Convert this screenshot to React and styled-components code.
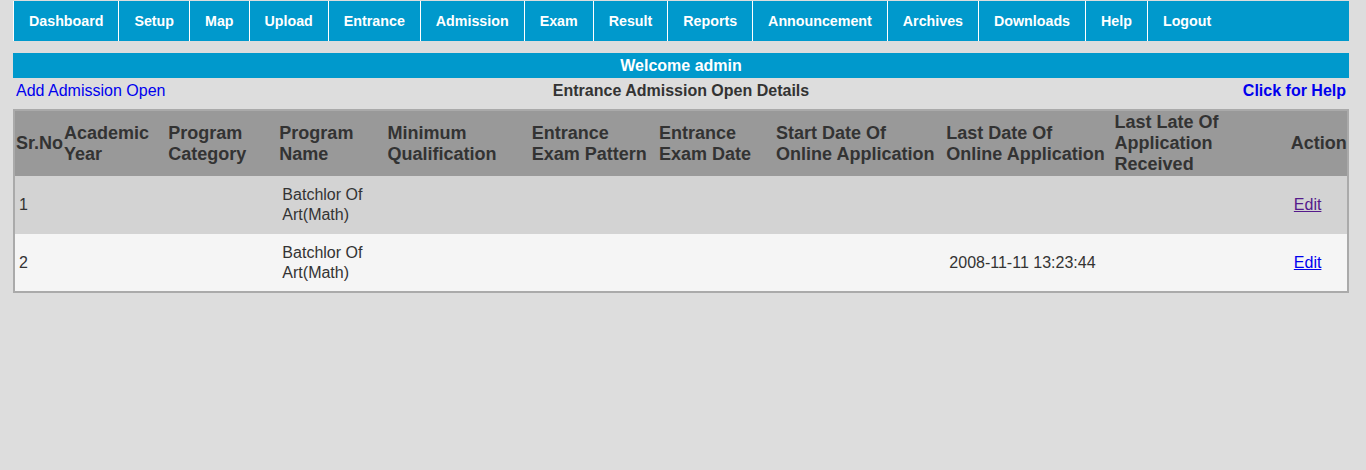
import React from "react"
import styled, { createGlobalStyle } from "styled-components"

const GlobalStyle = createGlobalStyle`
  html, body {
    margin: 0;
    padding: 0;
    background: #dddddd;
    font-family: "Liberation Sans", Arial, sans-serif;
  }
`

const Page = styled.div`
  width: 1336px;
  margin-left: 13px;
  padding-top: 1px;
`

const NavBar = styled.ul`
  display: flex;
  height: 40px;
  margin: 0;
  padding: 0;
  list-style: none;
  background: #0099cc;
`

const NavItem = styled.li`
  display: flex;
  align-items: center;
  padding: 0 15px;
  border-left: 1px solid #ffffff;
  color: #ffffff;
  font-size: 14.25px;
  font-weight: bold;
  white-space: nowrap;
`

const WelcomeBar = styled.div`
  margin-top: 12px;
  height: 25px;
  line-height: 25px;
  background: #0099cc;
  color: #ffffff;
  font-size: 16px;
  font-weight: bold;
  text-align: center;
`

const TitleRow = styled.div`
  display: grid;
  grid-template-columns: 1fr auto 1fr;
  align-items: start;
  box-sizing: border-box;
  height: 31px;
  padding: 3px 3px 0;
  line-height: 20px;
`

const LinkText = styled.a`
  color: #0000ee;
  font-size: 16px;
  font-weight: ${p => (p.$bold ? "bold" : "normal")};
  text-decoration: none;
  justify-self: ${p => (p.$right ? "end" : "start")};
  cursor: pointer;
`

const Title = styled.div`
  color: #333333;
  font-size: 16px;
  font-weight: bold;
`

const Table = styled.table`
  width: 1336px;
  table-layout: fixed;
  border-collapse: collapse;
  border: 2px solid #aaaaaa;
`

const HeadCell = styled.th`
  padding: 1px;
  background: #999999;
  color: #333333;
  font-size: 18px;
  font-weight: bold;
  line-height: 21px;
  text-align: left;
  vertical-align: middle;
`

const Row = styled.tr`
  height: 58px;
  background: ${p => (p.$alt ? "#f5f5f5" : "#d3d3d3")};
`

const Cell = styled.td`
  padding: 0 4px;
  color: #333333;
  font-size: 16px;
  line-height: 20px;
  vertical-align: middle;
`

const EditLink = styled.a`
  color: ${p => (p.$visited ? "#551a8b" : "#0000ee")};
  text-decoration: underline;
  cursor: pointer;
`

const menu = [
  "Dashboard", "Setup", "Map", "Upload", "Entrance", "Admission", "Exam",
  "Result", "Reports", "Announcement", "Archives", "Downloads", "Help", "Logout",
]

const columns = [
  { label: "Sr.No", width: 49 },
  { label: "Academic Year", width: 104 },
  { label: "Program Category", width: 111 },
  { label: "Program Name", width: 108 },
  { label: "Minimum Qualification", width: 144 },
  { label: "Entrance Exam Pattern", width: 127 },
  { label: "Entrance Exam Date", width: 117 },
  { label: "Start Date Of Online Application", width: 170 },
  { label: "Last Date Of Online Application", width: 168 },
  { label: "Last Late Of Application Received", width: 176 },
  { label: "Action", width: 58 },
]

const rows = [
  { no: 1, program: "Batchlor Of Art(Math)", lastDate: "", visited: true },
  { no: 2, program: "Batchlor Of Art(Math)", lastDate: "2008-11-11 13:23:44", visited: false },
]

export default function App() {
  return (
    <>
      <GlobalStyle />
      <Page>
        <NavBar>
          {menu.map(m => (
            <NavItem key={m}>{m}</NavItem>
          ))}
        </NavBar>

        <WelcomeBar>Welcome admin</WelcomeBar>

        <TitleRow>
          <LinkText>Add Admission Open</LinkText>
          <Title>Entrance Admission Open Details</Title>
          <LinkText $bold $right>Click for Help</LinkText>
        </TitleRow>

        <Table>
          <colgroup>
            {columns.map(c => (
              <col key={c.label} style={{ width: c.width }} />
            ))}
          </colgroup>
          <thead>
            <tr>
              {columns.map(c => (
                <HeadCell key={c.label}>{c.label}</HeadCell>
              ))}
            </tr>
          </thead>
          <tbody>
            {rows.map((r, i) => (
              <Row key={r.no} $alt={i % 2 === 1}>
                <Cell>{r.no}</Cell>
                <Cell />
                <Cell />
                <Cell>{r.program}</Cell>
                <Cell />
                <Cell />
                <Cell />
                <Cell />
                <Cell>{r.lastDate}</Cell>
                <Cell />
                <Cell>
                  <EditLink $visited={r.visited}>Edit</EditLink>
                </Cell>
              </Row>
            ))}
          </tbody>
        </Table>
      </Page>
    </>
  )
}
